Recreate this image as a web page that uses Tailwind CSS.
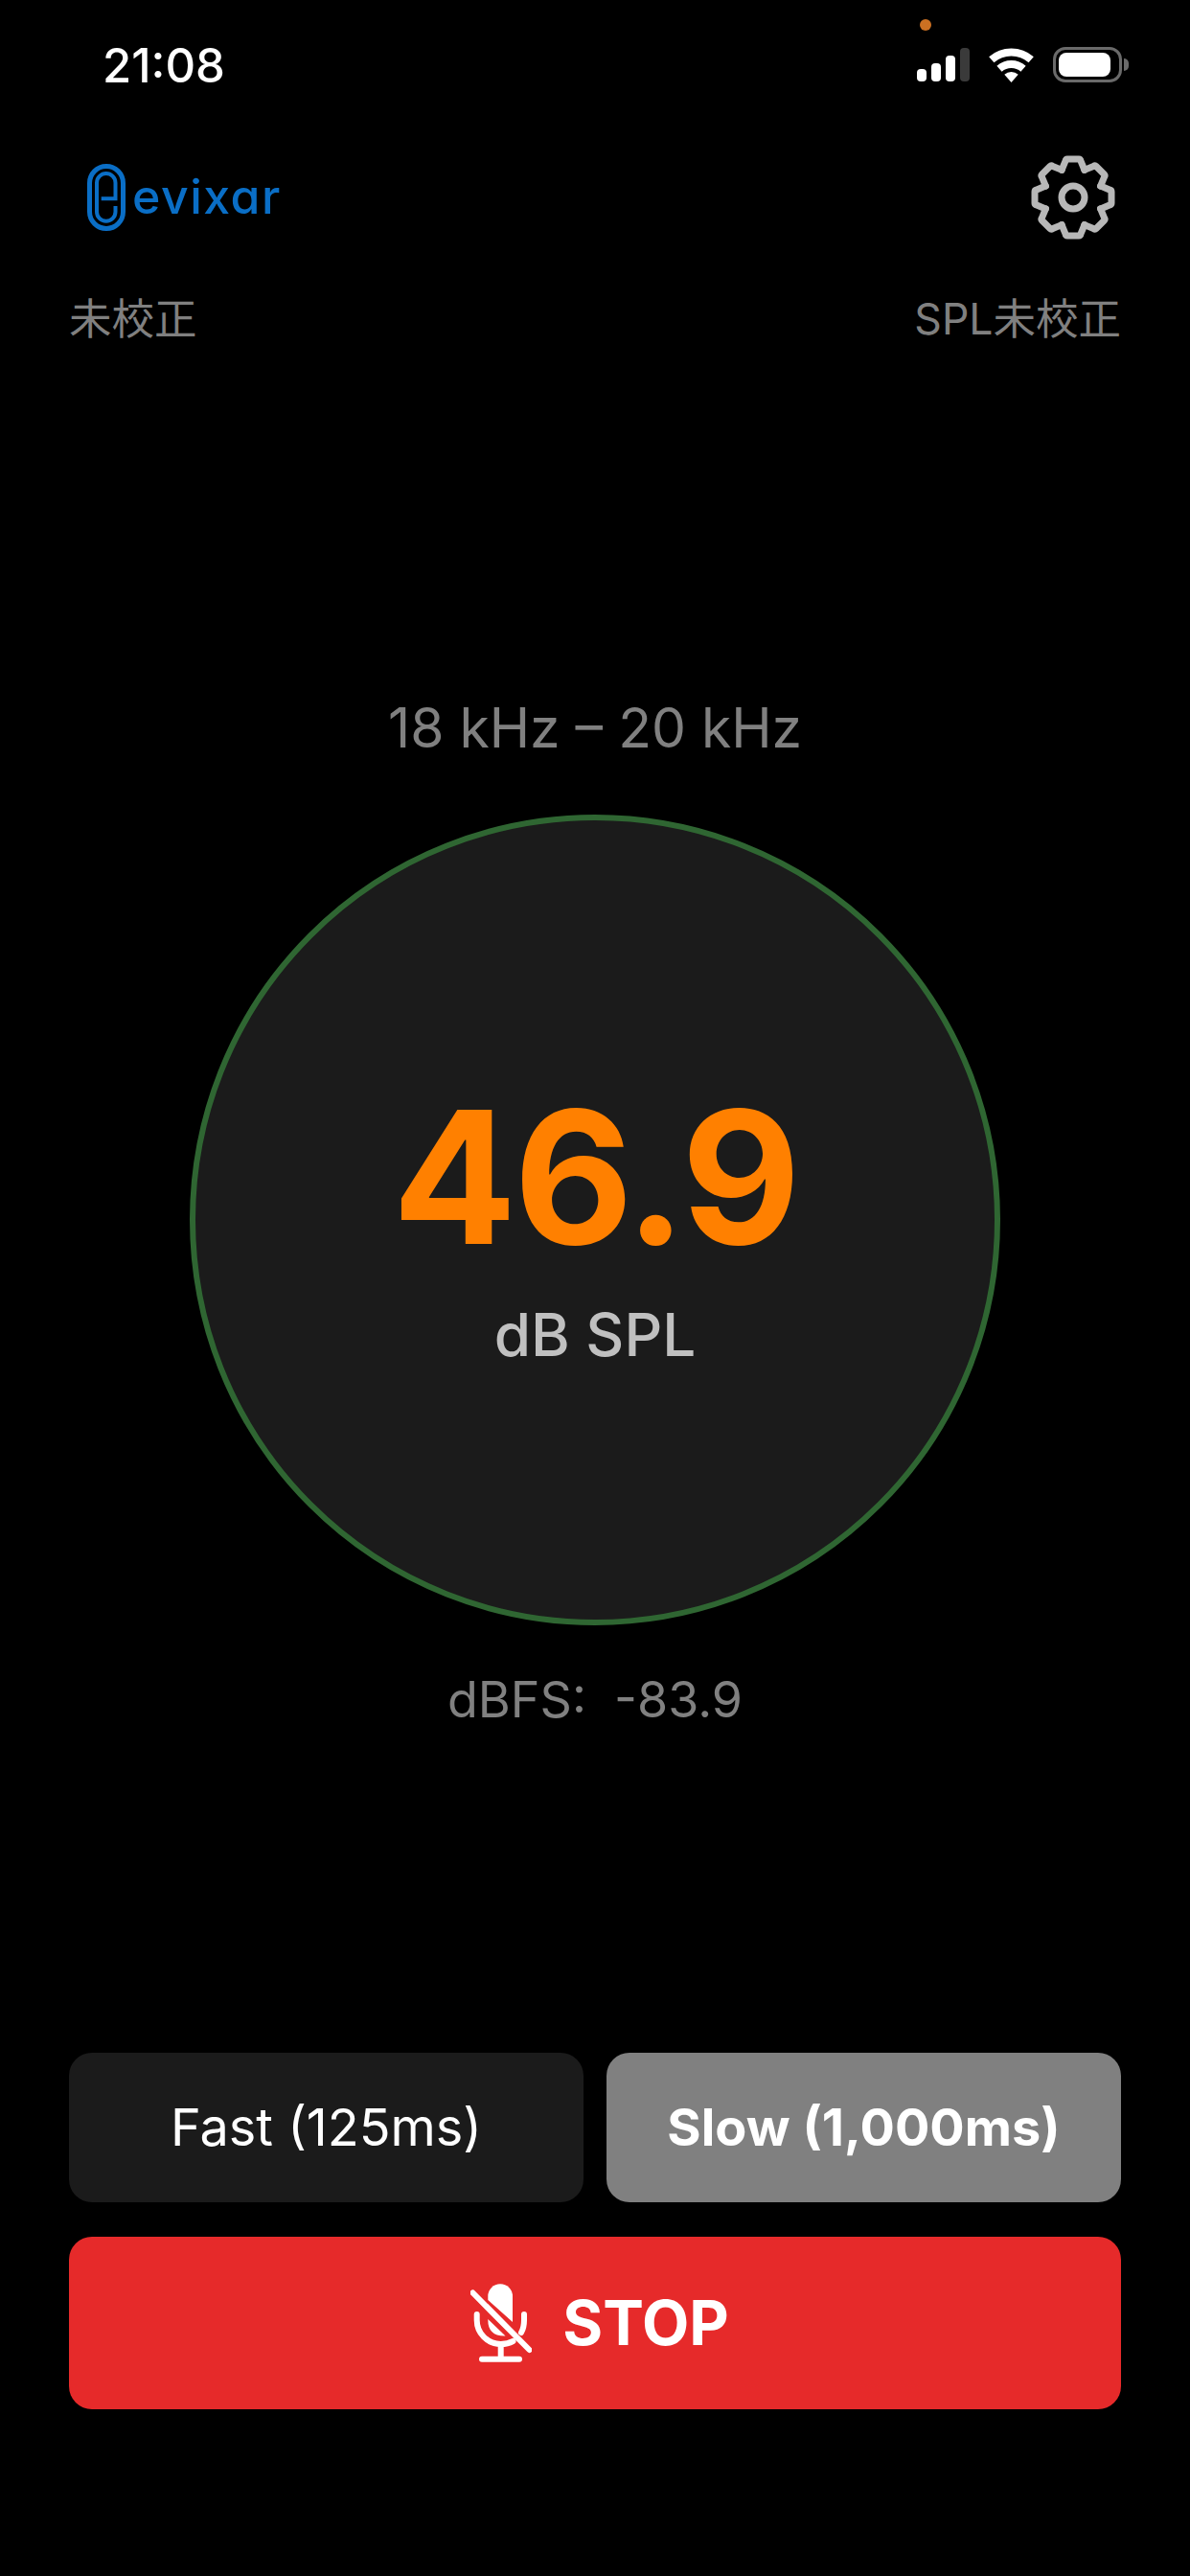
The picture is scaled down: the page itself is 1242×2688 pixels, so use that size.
<!DOCTYPE html>
<html lang="ja">
<head>
<meta charset="utf-8">
<title>evixar SPL</title>
<script src="https://cdn.jsdelivr.net/npm/@tailwindcss/browser@4"></script>
</head>
<body class="bg-black">
<div class="relative flex h-[2688px] w-[1242px] flex-col overflow-hidden bg-black font-['Inter','Noto_Sans_CJK_JP',sans-serif] text-white">

  <!-- status bar -->
  <div class="relative flex h-[162px] items-start justify-between pl-[107px] pr-[64px] pt-[45px]">
    <span class="text-[49px] leading-[48px] font-medium">21:08</span>
    <span class="absolute left-[960px] top-[20px] h-[12px] w-[12px] rounded-full bg-[#cc7022]"></span>
    <div class="flex items-start gap-[20px] pt-[4px]">
      <div class="flex h-[36px] items-end gap-[5px]">
        <span class="h-[13px] w-[10px] rounded-[4px] bg-white"></span>
        <span class="h-[19px] w-[10px] rounded-[4px] bg-white"></span>
        <span class="h-[27px] w-[10px] rounded-[4px] bg-white"></span>
        <span class="h-[35px] w-[10px] rounded-[4px] bg-[#3a3a3a]"></span>
      </div>
      <svg class="h-[37px] w-[47px]" viewBox="0 0 47 37" fill="none">
        <path d="M2.8 13.2A31.5 31.5 0 0 1 44.2 13.2" stroke="#fff" stroke-width="8"/>
        <path d="M11 22.7A19 19 0 0 1 36 22.7" stroke="#fff" stroke-width="8"/>
        <path d="M23.5 37L16.3 28.7A11 11 0 0 1 30.7 28.7Z" fill="#fff"/>
      </svg>
      <div class="flex items-center gap-[2px]">
        <div class="flex h-[37px] w-[72px] items-center rounded-[13px] border-[3px] border-[#6a6a6a] pl-[3px]">
          <span class="h-[25px] w-[54px] rounded-[8px] bg-white"></span>
        </div>
        <span class="h-[13px] w-[5px] rounded-r-full bg-[#6a6a6a]"></span>
      </div>
    </div>
  </div>

  <!-- header -->
  <div class="flex h-[88px] items-start justify-between pl-[91px] pr-[78px]">
    <div class="mt-[9px] flex items-start gap-[7px] text-[#0a6ec6]">
      <svg class="h-[70px] w-[40px]" viewBox="0 0 40 70" fill="none" stroke="currentColor">
        <rect x="2.5" y="2.5" width="35" height="65" rx="17.5" stroke-width="5"/>
        <path d="M14.7 36.3H29.5V19.8A9.75 9.75 0 0 0 10 19.8V50A9.75 9.75 0 0 0 29.5 50V44" stroke-width="4"/>
      </svg>
      <span class="mt-[4px] text-[50px] leading-[60px] font-medium tracking-[1.5px] [font-feature-settings:'cv11']">evixar</span>
    </div>
    <svg class="h-[88px] w-[88px]" viewBox="-44 -44 88 88" fill="none" stroke="#b8b8b8" stroke-width="7" stroke-linejoin="round" stroke-linecap="round">
      <circle cx="0" cy="0" r="12"/>
      <path d="M-11.9 -28.6L-8 -38Q-7.6 -40 -6 -40H6Q7.6 -40 8 -38L11.9 -28.6"/>
      <path transform="rotate(45)" d="M-11.9 -28.6L-8 -38Q-7.6 -40 -6 -40H6Q7.6 -40 8 -38L11.9 -28.6"/>
      <path transform="rotate(90)" d="M-11.9 -28.6L-8 -38Q-7.6 -40 -6 -40H6Q7.6 -40 8 -38L11.9 -28.6"/>
      <path transform="rotate(135)" d="M-11.9 -28.6L-8 -38Q-7.6 -40 -6 -40H6Q7.6 -40 8 -38L11.9 -28.6"/>
      <path transform="rotate(180)" d="M-11.9 -28.6L-8 -38Q-7.6 -40 -6 -40H6Q7.6 -40 8 -38L11.9 -28.6"/>
      <path transform="rotate(225)" d="M-11.9 -28.6L-8 -38Q-7.6 -40 -6 -40H6Q7.6 -40 8 -38L11.9 -28.6"/>
      <path transform="rotate(270)" d="M-11.9 -28.6L-8 -38Q-7.6 -40 -6 -40H6Q7.6 -40 8 -38L11.9 -28.6"/>
      <path transform="rotate(315)" d="M-11.9 -28.6L-8 -38Q-7.6 -40 -6 -40H6Q7.6 -40 8 -38L11.9 -28.6"/>
    </svg>
  </div>

  <!-- calibration -->
  <div class="mt-[59px] flex justify-between px-[72px] text-[44.5px] leading-[48px] text-[#808080]">
    <span>未校正</span>
    <span>SPL未校正</span>
  </div>

  <!-- meter -->
  <div class="mt-[373px] flex flex-col items-center">
    <div class="text-[57px] leading-[60px] text-[#808080]">18 kHz – 20 kHz</div>
    <div class="mt-[60px] flex h-[846px] w-[846px] flex-col items-center rounded-full border-[6px] border-[#2f6632] bg-[#1b1b1b] pt-[262px]">
      <div class="text-[192px] leading-[220px] font-bold tracking-[-3px] text-[#ff8000]">46.9</div>
      <div class="mt-[20px] text-[62px] leading-[70px] font-medium text-[#c0c0c0]">dB SPL</div>
    </div>
    <div class="mt-[48px] text-[52px] leading-[60px] whitespace-pre text-[#808080]">dBFS:  -83.9</div>
  </div>

  <!-- controls -->
  <div class="absolute inset-x-[72px] top-[2142px] flex flex-col gap-[36px]">
    <div class="flex gap-[24px]">
      <div class="flex h-[156px] flex-1 items-center justify-center rounded-[24px] bg-[#1b1b1b] pb-[2px] text-[54px]">Fast (125ms)</div>
      <div class="flex h-[156px] flex-1 items-center justify-center rounded-[24px] bg-[#808080] pb-[2px] text-[54px] font-bold">Slow (1,000ms)</div>
    </div>
    <div class="flex h-[180px] items-center justify-center gap-[32px] rounded-[24px] bg-[#e62a2a] pl-[10px]">
      <svg class="h-[82px] w-[64px]" viewBox="0 0 64 82" fill="none" stroke="#fff" stroke-width="6" stroke-linecap="round">
        <path d="M18.3 17V13A12.85 12.85 0 0 1 44 13V40Z" fill="#fff" stroke="none"/>
        <path d="M18.3 37L36.5 54.5Q18.3 55 18.3 38Z" fill="#fff" stroke="none"/>
        <path d="M2.5 9.5L61.5 69"/>
        <path d="M6.7 32V38A25 25 0 0 0 31.7 63Q39 63 44.5 60"/>
        <path d="M56 32V38Q56 46 53 51"/>
        <path d="M31.7 63V78.7M12 78.7H51"/>
      </svg>
      <span class="text-[64px] leading-[72px] font-bold">STOP</span>
    </div>
  </div>
</div>
</body>
</html>
